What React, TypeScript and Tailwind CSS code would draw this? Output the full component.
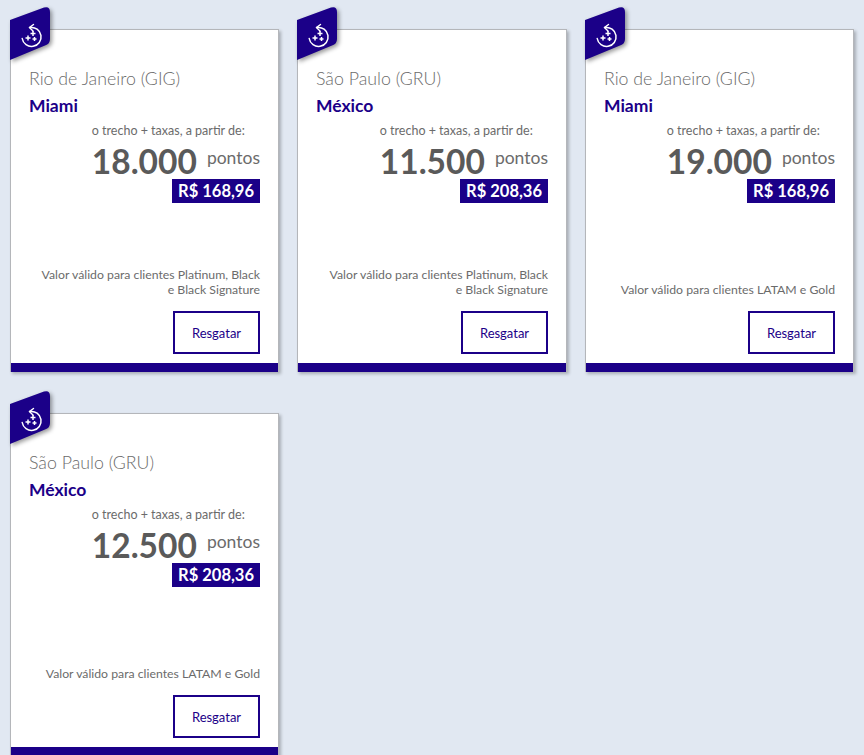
import React from 'react';

interface Offer {
	from: string;
	to: string;
	points: string;
	price: string;
	note: React.ReactNode;
}

const offers: Offer[] = [
	{ from: 'Rio de Janeiro (GIG)', to: 'Miami', points: '18.000', price: 'R$ 168,96', note: <>Valor válido para clientes Platinum, Black<br />e Black Signature</> },
	{ from: 'São Paulo (GRU)', to: 'México', points: '11.500', price: 'R$ 208,36', note: <>Valor válido para clientes Platinum, Black<br />e Black Signature</> },
	{ from: 'Rio de Janeiro (GIG)', to: 'Miami', points: '19.000', price: 'R$ 168,96', note: 'Valor válido para clientes LATAM e Gold' },
	{ from: 'São Paulo (GRU)', to: 'México', points: '12.500', price: 'R$ 208,36', note: 'Valor válido para clientes LATAM e Gold' },
];

const Badge = () => (
	<svg className="absolute left-[-1px] top-[-23px] drop-shadow-[2px_2px_2px_rgba(0,0,0,0.4)]" width="42" height="56" viewBox="0 0 42 56" fill="none">
		<path d="M0 13 L34 0.6 Q40 -1 40 5 L40 32 Q40 37 35 38.5 L0 53 Z" fill="#1b0088" />
		{/* refresh arrow ring */}
		<path d="M20 20.6 A9.5 9.5 0 1 1 12.2 31.5" stroke="white" strokeWidth="1.5" strokeLinecap="round" />
		<path d="M23.5 17.5 L19.4 20.6 L23 24" stroke="white" strokeWidth="1.4" strokeLinecap="round" strokeLinejoin="round" />
		<path d="M23 24v5M20.5 26.5h5M18 28.5v5M15.5 31h5M24.5 30v4M22.5 32h4" stroke="white" strokeWidth="1.5" />
	</svg>
);

const OfferCard = ({ offer }: { offer: Offer }) => (
	<div className="relative flex h-[343px] flex-col border border-[#b4b6ba] border-b-0 bg-white shadow-[2px_2px_3px_rgba(0,0,0,0.25)]">
		<Badge />
		<div className="flex flex-1 flex-col px-[18px]">
			<p className="mt-[36px] text-[17.75px] leading-[24px] text-[#6b6b6b] font-light">{offer.from}</p>
			<p className="mt-[4px] text-[17.5px] leading-[24px] font-bold text-[#1b0088]">{offer.to}</p>
			<div className="flex flex-col items-end">
				<div className="w-fit">
					<p className="mt-[4px] text-[12.5px] leading-[18px] text-[#6b6b6b]">o trecho + taxas, a partir de:</p>
					<div className="flex items-baseline justify-between gap-[10px]">
						<span className="text-[33.5px] leading-[42px] font-bold text-[#5a5a5a]">{offer.points}</span>
						<span className="relative top-[-10px] text-[17.5px] text-[#6b6b6b]">pontos</span>
					</div>
				</div>
				<span className="mt-[-3px] flex h-[24px] w-[88px] items-center justify-center bg-[#1b0088] text-[16.5px] font-bold text-white">{offer.price}</span>
			</div>
			<p className="mt-auto text-right text-[12.25px] leading-[15px] text-[#6b6b6b]">{offer.note}</p>
			<div className="mt-[14px] mb-[9px] flex justify-end">
				<button className="h-[43px] w-[87px] border-2 border-[#1b0088] bg-white pt-[3px] text-[13px] text-[#1b0088]">Resgatar</button>
			</div>
		</div>
		<div className="h-[9px] bg-[#1b0088]" />
	</div>
);

export default function App() {
	return (
		<div className="h-[755px] overflow-hidden bg-[#e1e8f2] font-['Lato',sans-serif]">
			<div className="grid grid-cols-[269px_270px_269px] gap-x-[18px] gap-y-[41px] pl-[10px] pt-[29px]">
				{offers.map((offer, i) => (
					<OfferCard key={i} offer={offer} />
				))}
			</div>
		</div>
	);
}
